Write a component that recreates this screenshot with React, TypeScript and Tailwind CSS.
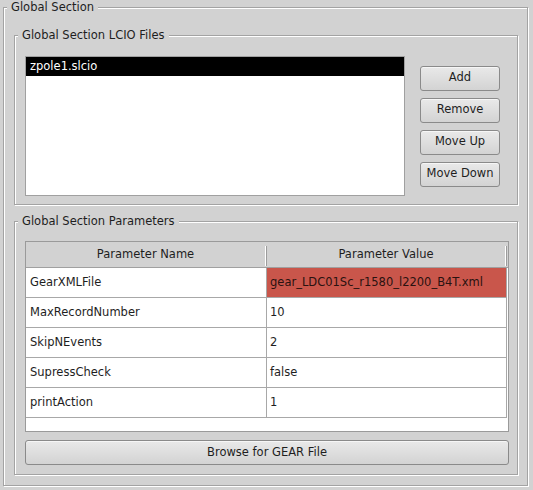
import type { ReactNode } from "react";

const files = ["zpole1.slcio"];

const params = [
  { name: "GearXMLFile", value: "gear_LDC01Sc_r1580_l2200_B4T.xml", error: true },
  { name: "MaxRecordNumber", value: "10" },
  { name: "SkipNEvents", value: "2" },
  { name: "SupressCheck", value: "false" },
  { name: "printAction", value: "1" },
];

// etched titled border, like Swing's TitledBorder
function TitledBox({
  title,
  className,
  children,
}: {
  title: string;
  className?: string;
  children: ReactNode;
}) {
  return (
    <div
      className={`relative border border-[#a3a3a3] shadow-[inset_1px_1px_0_#ffffff,1px_1px_0_#ffffff] ${className ?? ""}`}
    >
      <span className="absolute top-[-1px] left-[3px] -translate-y-1/2 bg-[#d2d2d2] px-1 leading-[14px] whitespace-nowrap">
        {title}
      </span>
      {children}
    </div>
  );
}

function Button({ label, className }: { label: string; className?: string }) {
  return (
    <button
      className={`flex h-[25px] items-center justify-center rounded-[3px] border border-[#8a8a8a] bg-gradient-to-b from-[#e9e9e9] to-[#d3d3d3] text-[#1e1e1e] shadow-[inset_0_1px_0_#f6f6f6] ${className ?? ""}`}
    >
      {label}
    </button>
  );
}

function HeaderDivider() {
  return (
    <div className="mt-[4px] mb-px w-[2px] border-r border-l border-r-[#9c9c9c] border-l-white" />
  );
}

export default function App() {
  return (
    <div className="h-[490px] w-[533px] bg-[#d2d2d2] pt-[7px] pl-[3px] font-['DejaVu_Sans',sans-serif] text-[11.5px] text-[#1e1e1e]">
      <TitledBox
        title="Global Section"
        className="flex h-[479px] w-[525px] flex-col gap-[16px] pt-[27px] pl-[10px]"
      >
        {/* LCIO files */}
        <TitledBox
          title="Global Section LCIO Files"
          className="flex h-[170px] w-[504px] items-center pt-[20px] pb-[8px] pl-[10px]"
        >
          <div className="h-[140px] w-[380px] border border-[#a0a0a0] bg-white">
            {files.map((f, i) => (
              <div
                key={f}
                className={`flex h-[19px] items-center pl-[4px] ${i === 0 ? "bg-black text-white" : ""}`}
              >
                {f}
              </div>
            ))}
          </div>
          <div className="ml-[15px] flex w-[80px] flex-col gap-[7px]">
            <Button label="Add" />
            <Button label="Remove" />
            <Button label="Move Up" />
            <Button label="Move Down" />
          </div>
        </TitledBox>

        {/* Parameters */}
        <TitledBox
          title="Global Section Parameters"
          className="flex h-[254px] w-[504px] flex-col pt-[19px] pl-[10px]"
        >
          <div className="h-[191px] w-[484px] border border-[#9a9a9a] bg-white">
            <div className="flex h-[26px] border-b border-[#a0a0a0] bg-[#d2d2d2]">
              <div className="flex w-[239px] items-center justify-center">Parameter Name</div>
              <HeaderDivider />
              <div className="flex flex-1 items-center justify-center">Parameter Value</div>
              <HeaderDivider />
              <div className="w-px" />
            </div>
            <div className="w-[481px]">
              {params.map((p) => (
                <div key={p.name} className="flex h-[30px] border-b border-[#a8a8a8]">
                  <div className="flex w-[241px] items-center border-r border-[#a8a8a8] pt-px pl-[4px]">
                    {p.name}
                  </div>
                  <div
                    className={`flex w-[240px] items-center border-r border-[#a8a8a8] pt-px pl-[3px] ${p.error ? "bg-[#c9564b] text-[#2a1210]" : ""}`}
                  >
                    {p.value}
                  </div>
                </div>
              ))}
            </div>
          </div>
          <Button label="Browse for GEAR File" className="mt-[8px] w-[484px]" />
        </TitledBox>
      </TitledBox>
    </div>
  );
}
